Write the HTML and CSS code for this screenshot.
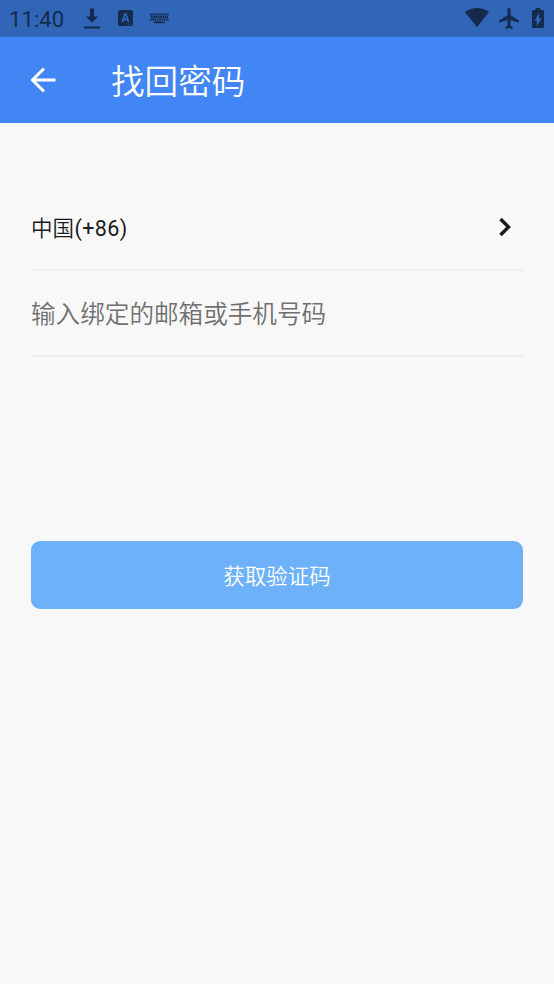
FILE: index.html
```html
<!DOCTYPE html>
<html lang="zh-CN">
<head>
<meta charset="utf-8">
<title>找回密码</title>
<link rel="stylesheet" href="styles.css">
</head>
<body>
<div class="status">
  <span class="clock">11:40</span>
  <svg class="i-download" width="16" height="21" viewBox="0 0 16 21"><path d="M6 .5h4v8h4L8 14.800 2 8.500h4zM0 18.500h16v2H0z"/></svg>
  <svg class="i-input" width="15" height="16" viewBox="0 0 15 16"><path fill-rule="evenodd" d="M2 0h11a2 2 0 0 1 2 2v12a2 2 0 0 1-2 2H2a2 2 0 0 1-2-2V2a2 2 0 0 1 2-2zM6.400 3 3.200 12h2l.6-1.800h3.100l.6 1.800h2L8.400 3zm1 2.200 1 3.400h-2zM8 13.700v.8h1.300v-.8zm2 0v.8h1.300v-.8zm2 0v.8h1.300v-.8z"/></svg>
  <svg class="i-keyboard" width="19" height="11" viewBox="0 0 19 11"><path class="keys" d="M0 1.500h19M1 4h17M0 6.500h19"/><path d="M4 8.400h11v1.800H4z"/></svg>
  <span class="spacer"></span>
  <svg class="i-wifi" width="24" height="19" viewBox="0 0 24 19"><path d="M0 4.200C7-1.400 17-1.400 24 4.200L12 19z"/></svg>
  <svg class="i-plane" width="20" height="21" viewBox="2 2 19 20"><path d="M21 16v-2l-8-5V3.500c0-.83-.67-1.500-1.500-1.500S10 2.670 10 3.500V9l-8 5v2l8-2.500V19l-2 1.500V22l3.500-1 3.500 1v-1.500L13 19v-5.500z"/></svg>
  <svg class="i-battery" width="12" height="20" viewBox="7 2 10 20" preserveAspectRatio="none"><path d="M15.670 4H14V2h-4v2H8.330C7.600 4 7 4.600 7 5.330v15.330C7 21.400 7.600 22 8.330 22h7.330c.74 0 1.340-.6 1.340-1.330V5.330C17 4.600 16.400 4 15.670 4zM11 20v-5.500H9L13 7v5.500h2z"/></svg>
</div>
<header class="bar">
  <svg class="back" width="26" height="26" viewBox="0 0 26 26"><path d="M25.500 13H2.500M14 1.500 2.500 13 14 24.500"/></svg>
  <h1>找回密码</h1>
</header>
<main>
  <div class="row country">
    <span class="region">中国<span class="code">(+86)</span></span>
    <svg width="12" height="20" viewBox="0 0 12 20"><path d="M1.500 2 9.500 10l-8 8"/></svg>
  </div>
  <div class="row account">输入绑定的邮箱或手机号码</div>
  <button type="button">获取验证码</button>
</main>
</body>
</html>
```
FILE: styles.css
```css
* { box-sizing: border-box; }
body {
  margin: 0;
  height: 984px;
  background: #f8f8f8;
  font-family: Roboto, "Noto Sans CJK SC", sans-serif;
  font-weight: 350;
  overflow: hidden;
}
svg { display: block; flex: none; }
.status {
  display: flex;
  align-items: flex-start;
  height: 37px;
  padding: 8px 10px 0 9px;
  background: #3065b7;
  color: #152b4e;
}
.status svg { fill: #152b4e; }
.clock { width: 75px; font-size: 22px; line-height: 24px; font-weight: 400; letter-spacing: .1px; }
.i-input { margin: 2px 0 0 18px; }
.i-keyboard { margin: 5px 0 0 17px; }
.keys { stroke: #152b4e; stroke-width: 1.8; stroke-dasharray: 1.7 .6; }
.spacer { flex: 1; }
.i-plane { margin-left: 10px; }
.i-battery { margin-left: 13px; }
.bar {
  display: flex;
  align-items: center;
  height: 86px;
  padding-left: 30px;
  background: #4285f4;
  color: #fff;
}
.back { fill: none; stroke: #fff; stroke-width: 3; }
.bar h1 {
  margin: 0 0 0 55px;
  padding-top: 6px;
  font-size: 33.600px;
  line-height: 50px;
  font-weight: 350;
}
main { padding: 62px 31px 0; }
.row {
  display: flex;
  align-items: center;
  height: 86px;
  border-bottom: 2px solid #eee;
}
.country {
  justify-content: space-between;
  padding-right: 12px;
  font-size: 21.500px;
  color: #1b1b1d;
}
.region { padding-bottom: 2px; }
.code { margin-left: .5px; font-weight: 400; font-size: 21.500px; letter-spacing: .4px; }
.country svg { fill: none; stroke: #1b1b1d; stroke-width: 3.400; }
.account { padding-bottom: 2px; font-size: 24.600px; color: #707070; }
button {
  display: block;
  width: 100%;
  height: 68px;
  margin-top: 184px;
  padding: 0 0 2px;
  border: 0;
  border-radius: 9px;
  background: #6db1f8;
  color: #fff;
  font-family: inherit;
  font-size: 21.500px;
  font-weight: 350;
}
```
